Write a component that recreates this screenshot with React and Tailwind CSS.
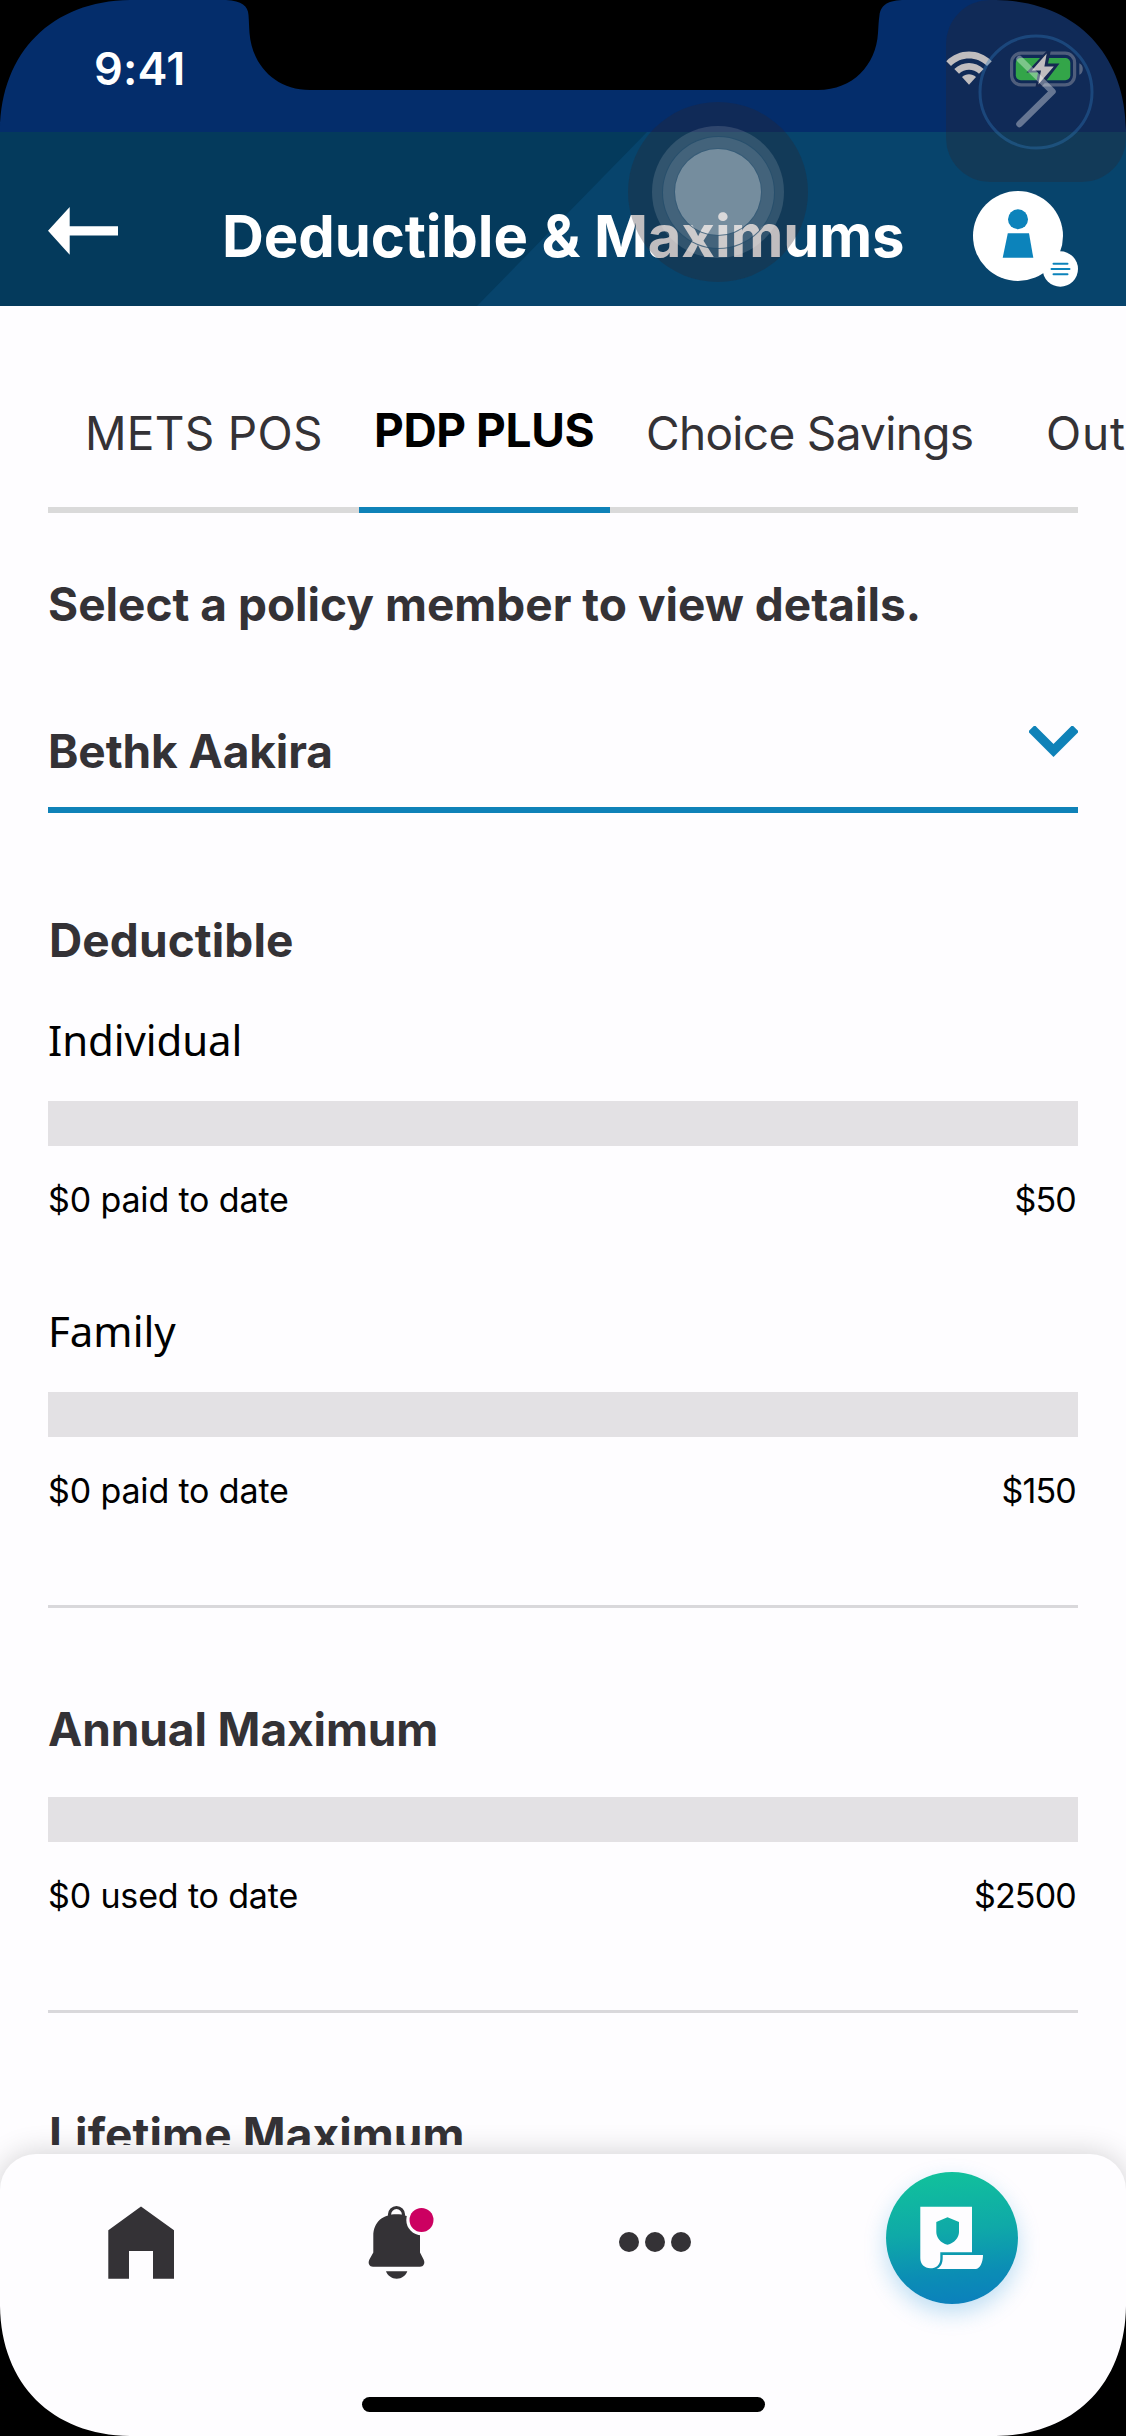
import React from "react";

function StatusBar() {
  return (
    <div className="flex h-[132px] items-start bg-[#042d6b] pl-[94px]">
      <span className="mt-[42px] w-[852px] text-[45px] leading-[54px] font-semibold tracking-[0.2px] text-white">9:41</span>
      <svg className="mt-[51px] shrink-0" width="46" height="36" viewBox="0 0 46 36" fill="#fff">
        <path d="M0.3 10.2C13 -2.6 33 -2.6 45.700 10.2L41 14.900C31 5 15 5 5 14.900Z" />
        <path d="M8.300 18C16.500 10 29.500 10 37.700 18L33 22.800C27.500 17.400 18.500 17.400 13 22.800Z" />
        <path d="M16 26C20 22.300 26 22.300 30 26L23 33.700Z" />
      </svg>
      <svg className="mt-[51px] ml-[18px] shrink-0" width="76" height="36" viewBox="0 0 76 36">
        <rect x="1.600" y="2.200" width="63" height="31.600" rx="9.500" fill="none" stroke="#fff" strokeOpacity="0.36" strokeWidth="3.200" />
        <path d="M69.300 12.200C74 14 74 22 69.300 23.800Z" fill="#fff" fillOpacity="0.4" />
        <rect x="5.800" y="7" width="54.500" height="22.300" rx="5" fill="#35dd57" />
        <path d="M37.500 -1L16.500 21.500H28L25.500 36H31.500L49.500 12.500H38L41 -1Z" fill="#0b2a62" />
        <path d="M36.700 2.600L21.800 19.600H31L28.300 33.600L43.800 15.400H34.400Z" fill="#fff" />
      </svg>
    </div>
  );
}

function Header() {
  return (
    <header className="relative h-[174px] bg-[#043a5c]">
      <div className="absolute inset-0 bg-[#07446c] [clip-path:polygon(647px_0,100%_0,100%_100%,477px_100%)]" />
      <div className="relative flex items-start pl-12">
        <svg className="mt-[75px] shrink-0" width="70" height="48" viewBox="0 0 70 48" fill="#fff">
          <path d="M0 23.700L21.700 0V19.300H70V28.500H21.700V47.700Z" />
        </svg>
        <h1 className="mt-[69px] ml-[104px] w-[751px] text-[58px] leading-[70px] font-bold tracking-[-0.12px] whitespace-nowrap text-white">
          Deductible &amp; Maximums
        </h1>
        <svg className="mt-[58px] shrink-0" width="106" height="98" viewBox="0 0 106 98">
          <circle cx="45" cy="46" r="45" fill="#fff" />
          <circle cx="45" cy="29.300" r="10" fill="#0c83bb" />
          <path d="M34.800 43.300H56L60.300 67.800H29.700Z" fill="#0c83bb" />
          <circle cx="87.300" cy="79" r="17.700" fill="#fff" />
          <path d="M80.500 73.800H94.500M78.500 79H96.500M80.500 84.300H94.500" stroke="#0c83bb" strokeWidth="2" strokeLinecap="round" />
        </svg>
      </div>
    </header>
  );
}

function Tabs() {
  return (
    <div>
      <div className="flex h-[201px] items-start pt-[99px] pl-12 text-[46px] leading-[56px] whitespace-nowrap text-[#343236]">
        <div className="w-[311px] shrink-0 pl-[37px] tracking-[0.3px]">METS POS</div>
        <div className="-mt-[3px] w-[251px] shrink-0 pl-[15px] font-bold tracking-[-0.4px] text-black">PDP PLUS</div>
        <div className="w-[436px] shrink-0 pl-[36px] tracking-[-0.68px]">Choice Savings</div>
        <div className="shrink-0 tracking-[0.8px]">Out</div>
      </div>
      <div className="mx-12 flex h-[6px] bg-[#dadada]">
        <div className="ml-[311px] w-[251px] bg-[#0f82b8]" />
      </div>
    </div>
  );
}

function Meter({ note, total }) {
  return (
    <div>
      <div className="h-[45px] bg-[#e3e1e4]" />
      <div className="mt-[34px] flex justify-between pr-[2px] text-[34px] leading-[40px] text-black">
        <span className="tracking-[-0.15px]">{note}</span>
        <span className="tracking-[-0.8px]">{total}</span>
      </div>
    </div>
  );
}

function Heading({ className, children }) {
  return <h2 className={"text-[46px] leading-[56px] font-bold whitespace-nowrap text-[#343236] " + className}>{children}</h2>;
}

function NavBar() {
  return (
    <nav className="relative mt-[9px] h-[282px] rounded-t-[36px] bg-[#fefdff] pt-[18px] shadow-[0_0_30px_rgba(0,0,0,0.19)]">
      <div className="flex h-[132px] items-start pl-[108px]">
        <svg className="mt-[34px] shrink-0" width="66" height="74" viewBox="0 0 66 74" fill="#343236">
          <path d="M0.300 24.300L33 0.600L66 24.300V72.700H45V45H21V72.700H0.300Z" />
        </svg>
        <svg className="mt-[32px] ml-[192px] shrink-0" width="72" height="76" viewBox="0 0 72 76">
          <circle cx="30.500" cy="10.500" r="7" fill="none" stroke="#343236" strokeWidth="3.200" />
          <path d="M7.300 32C7.300 18 17 10.300 30.500 10.300S54 18 54 32V48.500L57.600 55.500C59.500 59.500 57.500 62.700 54 62.700H7C3.500 62.700 1.500 59.500 3.400 55.500L7.300 48.500Z" fill="#343236" />
          <path d="M20 67.200H41.300C40 71.500 35.500 74.700 30.700 74.700S21.300 71.500 20 67.200Z" fill="#343236" />
          <circle cx="55.500" cy="16" r="15.200" fill="#fefdff" />
          <circle cx="55.500" cy="16" r="12" fill="#cc0061" />
        </svg>
        <div className="mt-[60px] ml-[181px] flex shrink-0 gap-[6px]">
          <div className="size-5 rounded-full bg-[#343236]" />
          <div className="size-5 rounded-full bg-[#343236]" />
          <div className="size-5 rounded-full bg-[#343236]" />
        </div>
        <div className="ml-[195px] size-[132px] shrink-0 rounded-full bg-[linear-gradient(174deg,#11c29b_2%,#0fa9a8_45%,#0b8db5_75%,#0b7fbd_98%)] shadow-[0_9px_22px_rgba(20,140,210,0.27)]">
          <svg width="132" height="132" viewBox="0 0 132 132" fill="#fefdff">
            <path
              fillRule="evenodd"
              d="M34.300 34.700H86V80.300H54.300V87C54.300 93 50 96.300 44.300 96.300C38.500 96.300 34.300 92 34.300 86ZM61.500 45.300L50.300 50V60C50.300 65.500 54.500 71 61.500 72.700C68.500 71 73 65.500 73 60V50Z"
            />
            <path d="M56.700 83H97C97 90 94 97 89.500 97H50.500C55 95 56.700 91 56.700 86Z" />
          </svg>
        </div>
      </div>
      <div className="mx-auto mt-[93px] h-[15px] w-[403px] rounded-full bg-black" />
    </nav>
  );
}

/* Translucent touch indicator floating over the title */
function TouchIndicator() {
  return (
    <div className="absolute top-[102px] left-[628px] flex size-[180px] items-center justify-center rounded-full bg-[#2d252b]/30">
      <div className="flex size-[132px] items-center justify-center rounded-full bg-white/13">
        <div className="flex size-[113px] items-center justify-center rounded-full border border-[#1c4766]/70 bg-white/9">
          <div className="size-[88px] rounded-full border border-[#1c4766]/70 bg-white/27" />
        </div>
      </div>
    </div>
  );
}

/* Translucent forward button in the top-right corner */
function CornerWidget() {
  return (
    <div className="absolute top-0 left-[946px] h-[182px] w-[180px] rounded-[44px] bg-[#2d252b]/30">
      <svg width="180" height="182" viewBox="0 0 180 182" fill="none">
        <circle cx="90" cy="92" r="56" stroke="#2f75b8" strokeOpacity="0.38" strokeWidth="3" />
        <path d="M73.500 59L106.500 91.500L73.500 124" stroke="#fff" strokeOpacity="0.36" strokeWidth="6.500" strokeLinecap="round" strokeLinejoin="round" />
      </svg>
    </div>
  );
}

/* Rounded device corners and notch */
function DeviceFrame() {
  return (
    <svg className="pointer-events-none absolute inset-0" width="1126" height="2436" viewBox="0 0 1126 2436">
      <path d="M0 0H130C52 1 1 52 0 130Z" />
      <path d="M1126 0H996C1074 1 1125 52 1126 130Z" />
      <path d="M0 2436H130C52 2435 1 2384 0 2306Z" />
      <path d="M1126 2436H996C1074 2435 1125 2384 1126 2306Z" />
      <path d="M226 0C242 1 248 6 248.500 15C249 22 249 26 249.500 33C252 65 275 90 310 90H818C853 90 876 65 878 33C878.500 26 878.500 22 879.500 15C881 6 886 1 902 0Z" />
    </svg>
  );
}

export default function App() {
  return (
    <div className="relative h-[2436px] w-[1126px] overflow-hidden bg-[#fefdff] font-['Inter',sans-serif]">
      <StatusBar />
      <Header />
      <main className="h-[1839px] overflow-hidden">
        <Tabs />
        <div className="px-12">
          <Heading className="mt-[63px] tracking-[0.01px]">Select a policy member to view details.</Heading>
          <div className="mt-[91px] flex h-[90px] items-start justify-between border-b-[6px] border-[#0f82b8]">
            <span className="text-[46px] leading-[56px] font-bold tracking-[-0.1px] text-[#343236]">Bethk Aakira</span>
            <svg className="mt-[3px]" width="49" height="32" viewBox="0 0 49 32">
              <path d="M5.700 5.700L24.500 24.500L43.300 5.700" fill="none" stroke="#0f82b8" strokeWidth="9.300" strokeLinecap="square" />
            </svg>
          </div>

          <Heading className="mt-[99px] pl-px tracking-[0.1px]">Deductible</Heading>
          <h3 className="mt-[44px] font-['Noto_Sans',sans-serif] text-[42px] leading-[56px] tracking-[-0.1px] text-black">Individual</h3>
          <div className="mt-[33px]">
            <Meter note="$0 paid to date" total="$50" />
          </div>
          <h3 className="mt-[83px] font-['Noto_Sans',sans-serif] text-[42px] leading-[56px] text-black">Family</h3>
          <div className="mt-[33px]">
            <Meter note="$0 paid to date" total="$150" />
          </div>
          <div className="mt-[94px] h-[3px] bg-[#d9d8db]" />

          <Heading className="mt-[93px] tracking-[-0.1px]">Annual Maximum</Heading>
          <div className="mt-[40px]">
            <Meter note="$0 used to date" total="$2500" />
          </div>
          <div className="mt-[94px] h-[3px] bg-[#d9d8db]" />

          <Heading className="mt-[93px] pl-px tracking-[0.1px]">Lifetime Maximum</Heading>
        </div>
      </main>
      <NavBar />
      <TouchIndicator />
      <CornerWidget />
      <DeviceFrame />
    </div>
  );
}
